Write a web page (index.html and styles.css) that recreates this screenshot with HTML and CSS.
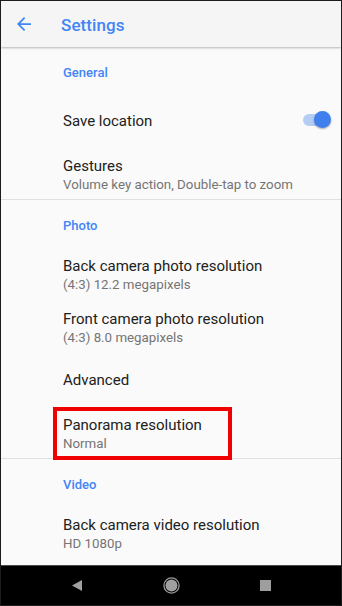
FILE: index.html
```html
<!DOCTYPE html>
<html>
<head>
<meta charset="utf-8">
<link rel="stylesheet" href="styles.css">
</head>
<body>
<div class="screen">
  <header class="appbar">
    <svg class="back" viewBox="4 4 16 16" width="14" height="14"><path d="M20 11H7.83l5.59-5.59L12 4l-8 8 8 8 1.41-1.41L7.83 13H20v-2z" fill="#4285f4"/></svg>
    <h1 class="title">Settings</h1>
  </header>
  <main class="content">
    <div class="cat">General</div>
    <div class="item single">
      <span class="label">Save location</span>
      <span class="switch"><span class="track"></span><span class="thumb"></span></span>
    </div>
    <div class="item">
      <div class="label">Gestures</div>
      <div class="sub">Volume key action, Double-tap to zoom</div>
    </div>
    <div class="divider"></div>
    <div class="cat">Photo</div>
    <div class="item">
      <div class="label">Back camera photo resolution</div>
      <div class="sub">(4:3) 12.2 megapixels</div>
    </div>
    <div class="item">
      <div class="label">Front camera photo resolution</div>
      <div class="sub">(4:3) 8.0 megapixels</div>
    </div>
    <div class="item single">
      <span class="label">Advanced</span>
    </div>
    <div class="item marked">
      <div class="label">Panorama resolution</div>
      <div class="sub">Normal</div>
      <span class="highlight"></span>
    </div>
    <div class="divider"></div>
    <div class="cat">Video</div>
    <div class="item">
      <div class="label">Back camera video resolution</div>
      <div class="sub">HD 1080p</div>
    </div>
  </main>
  <nav class="navbar">
    <span class="nav-cell"><svg width="10" height="11" viewBox="0 0 10 11"><path d="M0 5.5L10 0v11z" fill="#a0a0a0"/></svg></span>
    <span class="nav-cell"><svg width="17" height="17" viewBox="0 0 17 17"><circle cx="8.5" cy="8.5" r="7.6" fill="none" stroke="#9a9a9a" stroke-width="1.3"/><circle cx="8.5" cy="8.5" r="6" fill="#a0a0a0"/></svg></span>
    <span class="nav-cell"><span class="square"></span></span>
  </nav>
</div>
</body>
</html>
```

FILE: styles.css
```css
* { box-sizing: border-box; }
html, body { margin: 0; padding: 0; }
body {
  width: 342px;
  height: 606px;
  font-family: Roboto, "Noto Sans", sans-serif;
  background: #000;
}
.screen {
  width: 342px;
  height: 606px;
  border: 1px solid #1c1c1c;
  display: flex;
  flex-direction: column;
  overflow: hidden;
  background: #fafafa;
}
.appbar {
  height: 46px;
  flex: none;
  background: #f5f5f5;
  display: flex;
  align-items: center;
  padding-left: 16px;
  gap: 30px;
  box-shadow: 0 1px 2px rgba(0,0,0,0.28);
  position: relative;
  z-index: 1;
}
.back { display: block; }
.title {
  margin: 0;
  padding-top: 1px;
  font-size: 17px;
  font-weight: 500;
  color: #4285f4;
  letter-spacing: 0.1px;
}
.content {
  flex: 1;
  background: #fafafa;
  overflow: hidden;
}
.cat {
  height: 46px;
  padding: 18px 0 0 62px;
  font-size: 13px;
  line-height: 16px;
  font-weight: 500;
  color: #4285f4;
}
.item {
  height: 53px;
  padding: 10px 0 0 62px;
  position: relative;
}
.item.single {
  padding-top: 3px;
  display: flex;
  align-items: center;
  justify-content: space-between;
}
.label {
  font-size: 15px;
  line-height: 20px;
  color: #212121;
}
.sub {
  font-size: 13.3px;
  line-height: 18px;
  color: #757575;
}
.divider {
  height: 1px;
  background: #e0e0e0;
}
.switch {
  position: relative;
  width: 28px;
  height: 18px;
  margin-right: 10px;
  margin-top: -2px;
}
.track {
  position: absolute;
  left: 0;
  top: 3px;
  width: 24px;
  height: 12px;
  border-radius: 6px;
  background: #b4cdf5;
}
.thumb {
  position: absolute;
  right: 0;
  top: 0;
  width: 17px;
  height: 17px;
  border-radius: 50%;
  background: #3f80ee;
  box-shadow: 0 1px 2px rgba(0,0,0,0.35);
}
.highlight {
  position: absolute;
  left: 52px;
  top: 2px;
  width: 179px;
  height: 53px;
  border: 4px solid #f00000;
}
.navbar {
  height: 40px;
  flex: none;
  background: #000;
  border-top: 1px solid #4a4a4a;
  display: grid;
  grid-template-columns: repeat(3, 94px);
  padding: 0 29px;
  align-items: center;
}
.nav-cell {
  display: flex;
  justify-content: center;
  align-items: center;
}
.nav-cell svg { display: block; }
.square {
  width: 11px;
  height: 11px;
  background: #9e9e9e;
}
```
